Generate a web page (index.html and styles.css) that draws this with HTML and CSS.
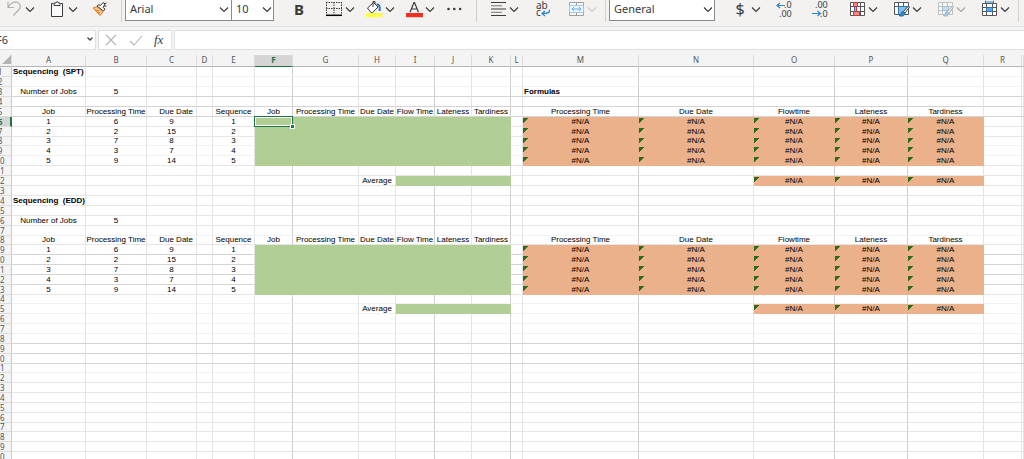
FILE: index.html
```html
<!DOCTYPE html>
<html lang="en">
<head>
<meta charset="utf-8">
<title>Sequencing workbook</title>
<link rel="stylesheet" href="styles.css">
</head>
<body>
<svg class="defs" aria-hidden="true">
  <symbol id="chev" viewBox="0 0 14 22"><path d="M3 7.500l4 4 4-4" fill="none" stroke="currentColor" stroke-width="1.200"/></symbol>
</svg>
<div class="app">
  <header class="toolbar">
    <div class="group clipboard">
      <div class="split">
        <button class="icon muted" aria-label="Undo"><svg viewBox="0 0 18 22"><path d="M3 1.500v6h6M3 7.500C5 4 8 1.600 11.500 2.200c4 .7 5 4.800 2.500 7.300L8.500 15.500" fill="none" stroke="currentColor" stroke-width="1.200"/></svg></button>
        <button class="more" aria-label="Undo list"><svg><use href="#chev"/></svg></button>
      </div>
      <div class="split">
        <button class="icon" aria-label="Paste"><svg viewBox="0 0 18 22"><path d="M5.500 3.500h-2v13h11v-13h-2" fill="#fafafa" stroke="currentColor"/><path d="M6 5.500v-2.500h2a1.200 1.200 0 0 1 2.400 0H12v2.500z" fill="#fff" stroke="currentColor"/></svg></button>
        <button class="more" aria-label="Paste options"><svg><use href="#chev"/></svg></button>
      </div>
      <button class="icon" aria-label="Format painter"><svg viewBox="0 0 18 22"><path d="M2 8l4-1.500 6 5.500-3 3.500z" fill="#f7c48b" stroke="#e07b1a"/><path d="M4 10l4 1M6 12.500l3 .5" stroke="#e07b1a" fill="none"/><path d="M6 6l2-1.500 1.500 1L12 2.500l2 1.500-2 3.500 2 1.500-1.500 2z" fill="#fff" stroke="currentColor"/><path d="M13 4l2.500-1M13 6l2.500 0" stroke="currentColor"/></svg></button>
    </div>
    <i class="sep"></i>
    <div class="group boxes">
      <label class="pick font"><select aria-label="Font"><option>Arial</option></select><svg><use href="#chev"/></svg></label>
      <label class="pick size"><select aria-label="Font size"><option>10</option></select><svg><use href="#chev"/></svg></label>
    </div>
    <div class="group styling">
      <button class="bold" aria-label="Bold">B</button>
      <div class="split">
        <button class="icon" aria-label="Borders"><svg viewBox="0 0 18 22"><path d="M1.500 2v12M9 2v12M16.500 2v12M1 2.500h16M1 8.500h16" fill="none" stroke="currentColor" stroke-dasharray="1.500 1"/><path d="M1 15.300h16" stroke="#000" stroke-width="1.500"/></svg></button>
        <button class="more" aria-label="Border options"><svg><use href="#chev"/></svg></button>
      </div>
      <div class="split">
        <button class="icon" aria-label="Fill color"><svg viewBox="0 0 18 22"><path d="M2.500 8L8.500 2.500l4.500 4.500-5.500 5.500H6z" fill="#fff" stroke="currentColor"/><path d="M8 7V1.500h2V4" fill="none" stroke="currentColor"/><path d="M11.500 4.500c3-.5 3.500 2 3.200 6.500" fill="none" stroke="#2e75b6" stroke-width="2"/><path d="M1 13h16.500v4.200H1z" fill="#ffff45"/></svg></button>
        <button class="more" aria-label="Fill colors"><svg><use href="#chev"/></svg></button>
      </div>
      <div class="split">
        <button class="icon" aria-label="Font color"><svg viewBox="0 0 18 22"><path d="M5 12.300L9 2.500h.5l4 9.800M6.300 9h6" fill="none" stroke="currentColor" stroke-width="1.200"/><path d="M1 13h17v4.200H1z" fill="#ee3123"/></svg></button>
        <button class="more" aria-label="Font colors"><svg><use href="#chev"/></svg></button>
      </div>
      <button class="icon" aria-label="More font options"><svg viewBox="0 0 18 22"><g fill="currentColor"><circle cx="3.500" cy="9" r="1.300"/><circle cx="9.300" cy="9" r="1.300"/><circle cx="15.100" cy="9" r="1.300"/></g></svg></button>
    </div>
    <i class="sep"></i>
    <div class="group aligning">
      <div class="split">
        <button class="icon" aria-label="Align"><svg viewBox="0 0 18 22"><path d="M2 2.500h15M2 9h15M2 15.500h15" stroke="currentColor" stroke-width="1.200"/><path d="M2 5.800h11M2 12.300h11" stroke="#777"/></svg></button>
        <button class="more" aria-label="Alignment options"><svg><use href="#chev"/></svg></button>
      </div>
      <button class="icon" aria-label="Wrap text"><svg viewBox="0 0 18 22"><text x="1" y="9" class="glyph">ab</text><text x="1" y="16" class="glyph">c</text><path d="M14.500 9.500c.5 3-1 4-7 4M10 11l-3 2.500 3 2.500" fill="none" stroke="#2f86c9" stroke-width="1.200"/></svg></button>
      <div class="split">
        <button class="icon" aria-label="Merge cells"><svg viewBox="0 0 18 22"><path d="M2.500 2.500h14v13h-14zM9.500 2.500v3M9.500 12.500v3" fill="#f8f8f8" stroke="#a0a0a0"/><path d="M2.500 5.500h14v7h-14z" fill="#eaf4fc" stroke="#9dcbee"/><path d="M5 9h9M7 7L5 9l2 2M12 7l2 2-2 2" fill="none" stroke="#6fabdc"/></svg></button>
        <button class="more faded" aria-label="Merge options"><svg><use href="#chev"/></svg></button>
      </div>
    </div>
    <i class="sep"></i>
    <div class="group boxes">
      <label class="pick format"><select aria-label="Number format"><option>General</option></select><svg><use href="#chev"/></svg></label>
    </div>
    <div class="group numbers">
      <div class="split">
        <button class="icon dollar" aria-label="Currency">$</button>
        <button class="more" aria-label="Currencies"><svg><use href="#chev"/></svg></button>
      </div>
      <div class="decimals">
        <button aria-label="Increase decimal"><svg viewBox="0 0 20 22"><path d="M10 5.500H2M5 3L2 5.500l3 2.500" fill="none" stroke="#2f86c9" stroke-width="1.200"/><text x="9" y="8" class="digits">.0</text><text x="4" y="17" class="digits">.00</text></svg></button>
        <button aria-label="Decrease decimal"><svg viewBox="0 0 20 22"><text x="4" y="8" class="digits">.00</text><path d="M1 13.500h8M6.500 11l3 2.500-3 2.500" fill="none" stroke="#2f86c9" stroke-width="1.200"/><text x="9" y="17" class="digits">.0</text></svg></button>
      </div>
      <div class="split">
        <button class="icon" aria-label="Conditional formatting"><svg viewBox="0 0 18 22"><path d="M2.500 2.500h14v13h-14zM2.500 6.500h14M2.500 11.500h14M12.500 2.500v13" fill="#fff" stroke="#555"/><path d="M5.500 2.500h4v4h-4zM5.500 11.500h6v4h-6z" fill="#f08a8a" stroke="#d13438"/><path d="M6 7h1.500v4H6z" fill="#2e75b6"/><path d="M8.500 6.500v5" stroke="#d13438"/></svg></button>
        <button class="more" aria-label="Rules"><svg><use href="#chev"/></svg></button>
      </div>
      <div class="split">
        <button class="icon" aria-label="Format as table"><svg viewBox="0 0 18 22"><path d="M2.500 2.500h14v12h-14zM2.500 6.500h14M6.500 2.500v12M11.500 2.500v4" fill="#fff" stroke="#555"/><path d="M6.500 6.500h9l-5 8h-4z" fill="#83beec" stroke="#2e75b6"/><path d="M16.500 6l-5 5.500 1.500 1.500 4.500-6z" fill="#fff" stroke="#444"/><path d="M11.500 11.500c-3 0-1.500 3.500-4.500 4 3.500 1.500 6 0 6-2.500z" fill="#2f86c9" stroke="#1f65a6"/></svg></button>
        <button class="more" aria-label="Table styles"><svg><use href="#chev"/></svg></button>
      </div>
      <div class="split faded">
        <button class="icon" aria-label="Cell styles"><svg viewBox="0 0 18 22"><path d="M2.500 2.500h14v12h-14zM2.500 6.500h14M2.500 10.500h14M6.500 2.500v12M11.500 2.500v12" fill="#fff" stroke="#777"/><path d="M6.500 6.500h6v4h-6z" fill="#83beec" stroke="#2e75b6"/><path d="M16.500 6l-5 5.500 1.500 1.500 4.500-6z" fill="#fff" stroke="#444"/><path d="M11.500 11.500c-3 0-1.500 3.500-4.500 4 3.500 1.500 6 0 6-2.500z" fill="#2f86c9" stroke="#1f65a6"/></svg></button>
        <button class="more" aria-label="More cell styles"><svg><use href="#chev"/></svg></button>
      </div>
      <div class="split">
        <button class="icon" aria-label="Cell size"><svg viewBox="0 0 18 22"><path d="M2.500 3.500h14v12h-14zM2.500 7.500h14M2.500 11.500h14M6.500 3.500v12M12.500 3.500v12" fill="#fff" stroke="#555"/><path d="M6.500 7.500h6v4h-6z" fill="#5ea6e0" stroke="#2e75b6"/><path d="M5 0h9v3H5z" fill="#f3f2f1"/><path d="M5.500 2h8M5.500 .5v3M13.500 .5v3" stroke="#2f86c9" fill="none"/></svg></button>
        <button class="more" aria-label="Cell options"><svg><use href="#chev"/></svg></button>
      </div>
    </div>
    <i class="sep"></i>
  </header>

  <div class="formula-bar">
    <label class="name-box"><input aria-label="Name box" value="F6"><svg viewBox="0 0 8 8"><path d="M1.500 2.500L4 5l2.500-2.500" fill="none" stroke="#444" stroke-width="1.300"/></svg></label>
    <div class="entry">
      <button aria-label="Cancel"><svg viewBox="0 0 14 14"><path d="M2 2l10 10M12 2L2 12" fill="none" stroke="#b5b5b5" stroke-width="1.100"/></svg></button>
      <button aria-label="Enter"><svg viewBox="0 0 14 14"><path d="M1 8l4 4 8-9" fill="none" stroke="#b5b5b5" stroke-width="1.100"/></svg></button>
      <button class="fx" aria-label="Insert function">fx</button>
    </div>
    <input class="formula" aria-label="Formula">
  </div>

  <main class="sheet">
    <table>
      <colgroup id="cols"></colgroup>
      <thead><tr id="letters"></tr></thead>
      <tbody id="rows"></tbody>
    </table>
  </main>
</div>
<script src="sheet.js"></script>
</body>
</html>
```

FILE: styles.css
```css
* { box-sizing: border-box; }
body {
  margin: 0;
  background: #f4f4f4;
  color: #3b3b3b;
  font: 11px/16px "Noto Sans", "Open Sans", sans-serif;
}
button {
  margin: 0; padding: 0; border: 0;
  background: none; color: inherit; font: inherit;
}
svg { display: block; overflow: visible; }
.defs { display: none; }
.app { display: flex; flex-direction: column; height: 100vh; overflow: hidden; }

.toolbar {
  display: flex;
  flex: none;
  height: 27px;
  background: #f3f2f1;
  border-bottom: 1px solid #e2e2e2;
  overflow: hidden;
}
.group, .split, .decimals { display: flex; flex: none; height: 22px; }
.icon { width: 18px; height: 22px; }
.icon svg { width: 18px; height: 22px; }
.more { width: 14px; height: 22px; }
.more svg { width: 14px; height: 22px; }
.muted { color: #b0b0b0; }
.faded { opacity: 0.4; }
.more.faded { opacity: 0.2; }
.sep { flex: none; width: 1px; height: 22px; background: #cfcfcf; }
.clipboard { padding: 0 12px 0 5px; gap: 11px; }
.boxes { padding-left: 3px; }
.styling { padding: 0 13px 0 16px; gap: 8px; }
.aligning { padding: 0 6px 0 12px; gap: 14px; }
.numbers { padding: 0 6px 0 16px; gap: 12px; }
.decimals { gap: 16px; margin-right: 5px; }
.decimals button, .decimals svg { width: 20px; height: 22px; }
.glyph { font: 10px "Noto Sans", sans-serif; fill: #3b3b3b; }
.digits { font: 9px "Noto Sans", sans-serif; fill: #3b3b3b; }
.bold { width: 27px; padding-left: 4px; text-align: left; font-size: 15px; font-weight: 700; line-height: 18px; height: 18px; }
.dollar { font-size: 16px; line-height: 18px; height: 18px; }

.pick { position: relative; display: block; height: 21px; }
.pick select {
  appearance: none;
  width: 100%; height: 21px;
  margin: 0; padding: 0 16px 3px 4px;
  border: 1px solid #8a8a8a; border-top: 0; border-radius: 0;
  background: #fff; color: #3b3b3b;
  font: inherit;
}
.pick svg { position: absolute; top: 0; right: 0; width: 14px; height: 22px; pointer-events: none; }
.font { width: 106px; }
.size { width: 43px; }
.font select { border-right: 0; }
.format { width: 106px; }

.formula-bar { display: flex; flex: none; gap: 2px; height: 28px; padding: 3px 0 5px; }
.name-box, .entry, .formula { border: 1px solid #e0e0e0; background: #fff; height: 20px; }
.name-box { display: flex; align-items: center; width: 96px; border-left: 0; overflow: hidden; }
.name-box input { flex: 1; min-width: 0; padding: 0; border: 0; font: inherit; color: inherit; text-indent: -4px; }
.name-box svg { width: 8px; height: 8px; margin-right: 1px; margin-bottom: 3px; }
.entry { display: flex; align-items: center; gap: 11px; width: 74px; padding-left: 5px; }
.entry svg { width: 14px; height: 14px; }
.fx { font: italic 13px/16px "Liberation Serif", serif; }
.formula { flex: 1; min-width: 0; border-right: 0; border-radius: 0; font: inherit; }

.sheet { flex: 1; min-height: 0; overflow: hidden; }
table {
  width: 100%;
  table-layout: fixed;
  border-collapse: separate;
  border-spacing: 0;
  background: #fff;
}
td, th { padding: 0; overflow: hidden; white-space: pre; }
thead th {
  height: 12px;
  padding-bottom: 2px;
  background: #f4f4f4;
  border-right: 1px solid #dcdcdc;
  border-bottom: 1px solid #b5b5b5;
  color: #555;
  font: 8px/9px "Noto Sans", sans-serif;
  text-align: center;
}
thead .picked { background: #d5d5d5; border-bottom-color: #217346; color: #217346; font-weight: 700; }
.corner { width: 12px; }
.corner::before {
  content: "";
  display: block;
  width: 9px; height: 9px;
  margin-left: 2px;
  background: #b5b5b5;
  clip-path: polygon(100% 0, 100% 100%, 0 100%);
}
tbody tr { height: 10px; --line: #e6e6e6; }
tbody tr.short { height: 9px; }
tbody tr.faint { --line: #f2f2f2; }
tbody tr.strong { --line: #d4d4d4; }
tbody th {
  background: #f4f4f4;
  border-right: 1px solid #cccccc;
  border-bottom: 1px solid #dcdcdc;
  color: #555;
  font: 8px/8px "Noto Sans", sans-serif;
}
tbody th span { display: block; width: 24px; margin-left: -12px; text-align: center; }
tbody th.picked { background: #d5d5d5; border-right: 2px solid #217346; color: #217346; font-weight: 700; }
td {
  border-right: 1px solid #e4e4e4;
  border-bottom: 1px solid var(--line);
  color: #000;
  font: 8px/8px "Liberation Sans", Arial, sans-serif;
  text-align: center;
}
td.deep { border-right-color: #d0d0d0; }
td.title { font-weight: 700; text-align: left; padding-left: 1px; overflow: visible; }
td.end { text-align: right; padding-right: 3px; }
td.green { background: #b1cf95; border-color: #b1cf95; }
td.orange {
  border-color: #ebb18b;
  background: linear-gradient(135deg, #2f6b1f 55%, transparent 55%) 0 1px / 5px 5px no-repeat #ebb18b;
}
td.active { position: relative; overflow: visible; }
.cursor {
  position: absolute;
  inset: -1px -1px -1px -1px;
  border: 1px solid #217346;
  box-shadow: inset 0 0 0 1px #fff;
}
.cursor::after {
  content: "";
  position: absolute;
  right: -2px; bottom: -2px;
  width: 3px; height: 3px;
  background: #217346;
  outline: 1px solid #fff;
}
.c-head { width: 12px; }
.c-A { width: 74px; }
.c-B { width: 61px; }
.c-C { width: 50px; }
.c-D { width: 16px; }
.c-E { width: 42px; }
.c-F { width: 38px; }
.c-G { width: 66px; }
.c-H { width: 37px; }
.c-I { width: 39px; }
.c-J { width: 37px; }
.c-K { width: 39px; }
.c-L { width: 12px; }
.c-M { width: 116px; }
.c-N { width: 115px; }
.c-O { width: 81px; }
.c-P { width: 73px; }
.c-Q { width: 76px; }
.c-R { width: 38px; }
```

FILE: sheet.js
```js
const letters = [..."ABCDEFGHIJKLMNOPQRS"];
const cells = {};
const put = (ref, text, cls = "") => { cells[ref] = { text, cls }; };

const jobs = [[1, 6, 9], [2, 2, 15], [3, 7, 8], [4, 3, 7], [5, 9, 14]];

function block(top, name) {
  put("A" + top, `Sequencing  (${name})`, "title");
  put("A" + (top + 2), "Number of Jobs");
  put("B" + (top + 2), 5);
  const head = top + 4;
  const names = {
    A: "Job", B: "Processing Time", C: "Due Date", E: "Sequence", F: "Job",
    G: "Processing Time", H: "Due Date", I: "Flow Time", J: "Lateness",
    K: "Tardiness", M: "Processing Time", N: "Due Date", O: "Flowtime",
    P: "Lateness", Q: "Tardiness"
  };
  for (const col in names) put(col + head, names[col], col === "C" ? "end" : "");
  jobs.forEach((job, i) => {
    const r = head + 1 + i;
    put("A" + r, job[0]);
    put("B" + r, job[1]);
    put("C" + r, job[2]);
    put("E" + r, job[0]);
    for (const col of "FGHIJK") put(col + r, "", "green");
    for (const col of "MNOPQ") put(col + r, "#N/A", "orange");
  });
  const avg = head + 7;
  put("H" + avg, "Average");
  for (const col of "IJK") put(col + avg, "", "green");
  for (const col of "OPQ") put(col + avg, "#N/A", "orange");
}
block(1, "SPT");
block(14, "EDD");
put("M3", "Formulas", "title");
cells.F6.cls += " active";

const shortRows = [8, 18, 24, 31, 37];
const faintRows = [1, 2, 8, 9, 17, 24, 25, 26, 27, 31];
const strongRows = [3, 4, 5, 19, 20, 21, 22, 28, 29, 30];
const deepCols = "FIKMOP";

document.getElementById("cols").innerHTML =
  '<col class="c-head">' + letters.map(l => `<col class="c-${l}">`).join("");
document.getElementById("letters").innerHTML =
  '<th class="corner"></th>' +
  letters.map(l => `<th scope="col"${l === "F" ? ' class="picked"' : ""}>${l === "S" ? "" : l}</th>`).join("");

let html = "";
for (let r = 1; r <= 40; r++) {
  const kinds = [
    shortRows.includes(r) ? "short" : "",
    faintRows.includes(r) ? "faint" : "",
    strongRows.includes(r) ? "strong" : ""
  ].join(" ").trim();
  html += `<tr class="${kinds}"><th scope="row"${r === 6 ? ' class="picked"' : ""}><span>${r}</span></th>`;
  for (const l of letters) {
    const cell = cells[l + r] || { text: "", cls: "" };
    const deep = deepCols.includes(l) ? "deep " : "";
    const cursor = l + r === "F6" ? '<div class="cursor"></div>' : "";
    html += `<td class="${deep}${cell.cls}">${cell.text}${cursor}</td>`;
  }
  html += "</tr>";
}
document.getElementById("rows").innerHTML = html;
```
